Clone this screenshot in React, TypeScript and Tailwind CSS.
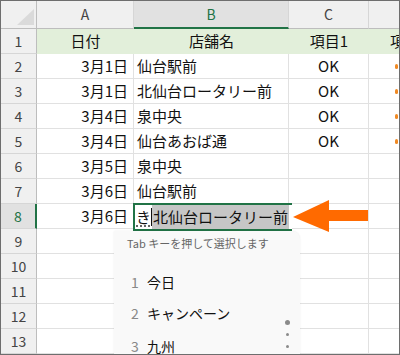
import React from "react";

const FONT = { fontFamily: '"Noto Sans CJK JP", "Noto Sans", sans-serif' };

const rows: { a: string; b: string; c: string; d: boolean }[] = [
  { a: "3月1日", b: "仙台駅前", c: "OK", d: true },
  { a: "3月1日", b: "北仙台ロータリー前", c: "OK", d: true },
  { a: "3月4日", b: "泉中央", c: "OK", d: true },
  { a: "3月4日", b: "仙台あおば通", c: "OK", d: true },
  { a: "3月5日", b: "泉中央", c: "", d: false },
  { a: "3月6日", b: "仙台駅前", c: "", d: false },
  { a: "3月6日", b: "", c: "", d: false },
  { a: "", b: "", c: "", d: false },
  { a: "", b: "", c: "", d: false },
  { a: "", b: "", c: "", d: false },
  { a: "", b: "", c: "", d: false },
  { a: "", b: "", c: "", d: false },
];

function RowHeader({ n, active }: { n: number; active?: boolean }) {
  return (
    <div
      className={`w-[36px] shrink-0 h-full flex items-center justify-center border-b border-[#d6d6d6] text-[14px] ${
        active
          ? "bg-[#e1e1e1] text-[#217346] border-r-2 border-r-[#217346]"
          : "bg-[#f0f0f0] text-[#444] border-r border-r-[#bdbdbd]"
      }`}
    >
      {n}
    </div>
  );
}

export default function App() {
  return (
    <div
      className="relative w-[400px] h-[355px] overflow-hidden border border-[#6e6e6e] bg-white text-[15px] text-[#111]"
      style={FONT}
    >
      {/* column header */}
      <div className="flex h-[28px]">
        <div className="relative w-[36px] shrink-0 bg-[#f0f0f0] border-r border-b border-[#bdbdbd]">
          <svg className="absolute left-0 top-0" width="36" height="28">
            <polygon points="16,24 33,8 33,24" fill="#dadada" />
          </svg>
        </div>
        <div className="w-[97px] shrink-0 bg-[#f0f0f0] border-r border-[#d6d6d6] border-b border-b-[#bdbdbd] flex items-center justify-center text-[14px] text-[#444]">
          A
        </div>
        <div className="w-[155px] shrink-0 bg-[#e1e1e1] border-r border-[#d6d6d6] border-b-2 border-b-[#217346] flex items-center justify-center text-[14px] text-[#217346]">
          B
        </div>
        <div className="w-[80px] shrink-0 bg-[#f0f0f0] border-r border-[#d6d6d6] border-b border-b-[#bdbdbd] flex items-center justify-center text-[14px] text-[#444]">
          C
        </div>
        <div className="flex-1 bg-[#f0f0f0] border-b border-[#bdbdbd]" />
      </div>

      {/* row 1 */}
      <div className="flex h-[25px]">
        <RowHeader n={1} />
        <div className="w-[97px] shrink-0 bg-[#e2efda] border-b border-[#e2efda] flex items-center justify-center">
          日付
        </div>
        <div className="w-[155px] shrink-0 bg-[#e2efda] border-b border-[#e2efda] flex items-center justify-center">
          店舗名
        </div>
        <div className="w-[80px] shrink-0 bg-[#e2efda] border-b border-[#e2efda] flex items-center justify-center">
          項目1
        </div>
        <div className="flex-1 bg-[#e2efda] border-b border-[#e2efda] overflow-hidden whitespace-nowrap pl-[21px] flex items-center">
          項目2
        </div>
      </div>

      {rows.map((r, i) => (
        <div key={i} className="flex h-[25px]">
          <RowHeader n={i + 2} active={i === 6} />
          <div className="w-[97px] shrink-0 border-r border-b border-[#e1e1e1] flex items-center justify-end pr-[5px]">
            {r.a}
          </div>
          <div className="w-[155px] shrink-0 border-r border-b border-[#e1e1e1] flex items-center pl-[3px] whitespace-nowrap">
            {r.b}
          </div>
          <div className="w-[80px] shrink-0 border-r border-b border-[#e1e1e1] flex items-center justify-center">
            {r.c}
          </div>
          <div className="flex-1 border-b border-[#e1e1e1] flex items-center pl-[26px]">
            {r.d && <div className="w-[3px] h-[5px] rounded-full bg-[#f08a24]" />}
          </div>
        </div>
      ))}

      {/* active editing cell */}
      <div className="absolute left-[132px] top-[202px] w-[159px] h-[28px] border-y-2 border-l-2 border-[#217346] bg-white flex items-center">
        <span className="ml-[1px] underline decoration-dotted decoration-[#333] underline-offset-[3px]">き</span>
        <span className="w-[1px] h-[18px] bg-[#111]" />
        <span className="bg-[#c6c6c6] h-[24px] flex items-center pl-[1px] pr-[1px] whitespace-nowrap">
          北仙台ロータリー前
        </span>
      </div>

      {/* arrow */}
      <svg className="absolute left-[290px] top-[198px]" width="80" height="34">
        <polygon points="2,18 38,1 38,11 77,11 77,22 38,22 38,33" fill="#ff6a00" />
      </svg>

      {/* autocomplete popup */}
      <div className="absolute left-[113px] top-[230px] w-[186px] h-[130px] bg-[#f9f9f9] rounded-tr-[8px] shadow-[0_0_2px_rgba(0,0,0,0.08)]">
        <div className="pl-[13px] pt-[4px] text-[11px] text-[#666]">Tab キーを押して選択します</div>
        <div className="mt-[21px] flex items-center pl-[17px] text-[14px] h-[20px]">
          <span className="w-[16px] text-[#888]">1</span>
          <span>今日</span>
        </div>
        <div className="mt-[11px] flex items-center pl-[17px] text-[14px] h-[20px]">
          <span className="w-[16px] text-[#888]">2</span>
          <span>キャンペーン</span>
        </div>
        <div className="mt-[13px] flex items-center pl-[17px] text-[14px] h-[20px]">
          <span className="w-[16px] text-[#888]">3</span>
          <span>九州</span>
        </div>
        <div className="absolute left-[171px] top-[89px] w-[5px] h-[5px] rounded-full bg-[#8a8a8a]" />
        <div className="absolute left-[172px] top-[102px] w-[3px] h-[3px] rounded-full bg-[#8a8a8a]" />
        <div className="absolute left-[172px] top-[114px] w-[3px] h-[3px] rounded-full bg-[#8a8a8a]" />
      </div>
    </div>
  );
}
